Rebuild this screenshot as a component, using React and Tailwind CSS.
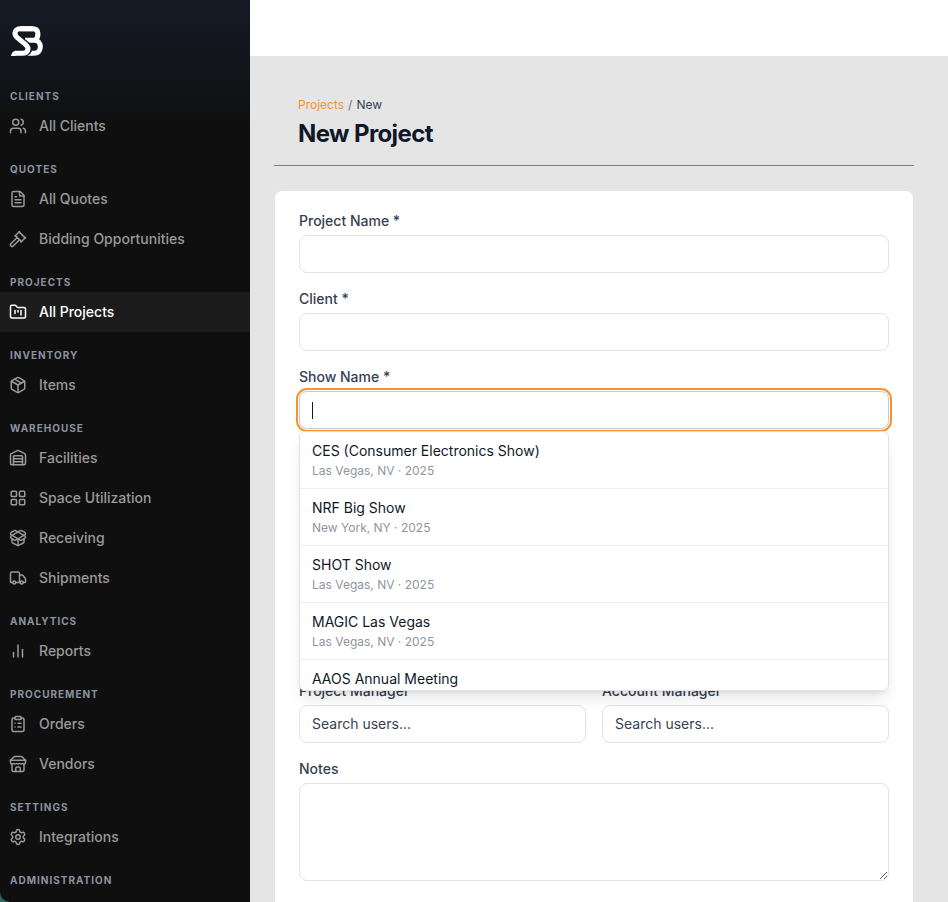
import { useState } from "react";
import {
  ClipboardList,
  FileText,
  FolderKanban,
  Gavel,
  LayoutGrid,
  Package,
  PackageOpen,
  Settings,
  Truck,
  Users,
  Warehouse,
} from "lucide-react";
import { FiBarChart2 } from "react-icons/fi";

// storefront with a flat awning
const Storefront = ({ size, strokeWidth }) => (
  <svg
    viewBox="0 0 24 24"
    width={size}
    height={size}
    fill="none"
    stroke="currentColor"
    strokeWidth={strokeWidth}
    strokeLinecap="round"
    strokeLinejoin="round"
  >
    <path d="m2 7 4.41-4.41A2 2 0 0 1 7.83 2h8.34a2 2 0 0 1 1.42.59L22 7" />
    <path d="M4 12v8a2 2 0 0 0 2 2h12a2 2 0 0 0 2-2v-8" />
    <path d="M15 22v-4a2 2 0 0 0-2-2h-2a2 2 0 0 0-2 2v4" />
    <path d="M2 7h20" />
    <path d="M22 7v3a2 2 0 0 1-2 2a2.7 2.7 0 0 1-1.59-.63.7.7 0 0 0-.82 0A2.7 2.7 0 0 1 16 12a2.7 2.7 0 0 1-1.59-.63.7.7 0 0 0-.82 0A2.7 2.7 0 0 1 12 12a2.7 2.7 0 0 1-1.59-.63.7.7 0 0 0-.82 0A2.7 2.7 0 0 1 8 12a2.7 2.7 0 0 1-1.59-.63.7.7 0 0 0-.82 0A2.7 2.7 0 0 1 4 12a2 2 0 0 1-2-2V7" />
  </svg>
);

const navGroups = [
  { title: "Clients", items: [{ name: "All Clients", icon: Users }] },
  {
    title: "Quotes",
    items: [
      { name: "All Quotes", icon: FileText },
      { name: "Bidding Opportunities", icon: Gavel },
    ],
  },
  { title: "Projects", items: [{ name: "All Projects", icon: FolderKanban, active: true }] },
  { title: "Inventory", items: [{ name: "Items", icon: Package }] },
  {
    title: "Warehouse",
    items: [
      { name: "Facilities", icon: Warehouse },
      { name: "Space Utilization", icon: LayoutGrid },
      { name: "Receiving", icon: PackageOpen },
      { name: "Shipments", icon: Truck },
    ],
  },
  { title: "Analytics", items: [{ name: "Reports", icon: FiBarChart2 }] },
  {
    title: "Procurement",
    items: [
      { name: "Orders", icon: ClipboardList },
      { name: "Vendors", icon: Storefront },
    ],
  },
  { title: "Settings", items: [{ name: "Integrations", icon: Settings }] },
  { title: "Administration", items: [] },
];

const shows = [
  { name: "CES (Consumer Electronics Show)", info: "Las Vegas, NV · 2025" },
  { name: "NRF Big Show", info: "New York, NY · 2025" },
  { name: "SHOT Show", info: "Las Vegas, NV · 2025" },
  { name: "MAGIC Las Vegas", info: "Las Vegas, NV · 2025" },
  { name: "AAOS Annual Meeting", info: "" },
];

const inputClass =
  "block w-full rounded-lg border border-[#e2e2e7] bg-white px-3 py-2 text-sm leading-5 text-gray-900 placeholder:text-gray-700 placeholder:opacity-100";

const Logo = () => (
  <svg viewBox="0 0 96 90" className="h-[30px] w-8" fill="none" strokeWidth="15">
    <path d="M42 43H70C94 43 94 82 70 82H48" stroke="white" />
    <path d="M28 8H66C84 8 84 30 74 42" stroke="white" />
    <path d="M34 82C56 82 58 66 46 56L20 34" stroke="#12161f" strokeWidth="20" />
    <path d="M12 82H34C52 82 56 66 44 56L18 34C6 23 13 8 28 8H66" stroke="white" />
    <path d="M0 90C2 79 6 75 14 74V90Z" fill="white" />
  </svg>
);

const Sidebar = () => (
  <aside className="w-[250px] shrink-0 overflow-hidden rounded-bl-[10px] bg-[#0f0f0f] bg-linear-to-b from-[#151a26] to-[#0f0f0f] to-[130px]">
    <a href="#" aria-label="Home" className="mb-[7px] flex h-[82px] items-center px-[11px]">
      <Logo />
    </a>
    <nav>
      {navGroups.map((group) => (
        <div key={group.title} className="mb-4">
          <h2 className="pb-0.5 pl-2.5 text-[10px] leading-[15px] font-bold tracking-[1px] text-[#8b93a1] uppercase">
            {group.title}
          </h2>
          <ul>
            {group.items.map(({ name, icon: Icon, active }) => (
              <li key={name}>
                <a
                  href="#"
                  className={`flex h-10 items-center gap-3 px-[9px] text-sm font-medium ${
                    active ? "bg-[#1c1c1c] text-white" : "text-[#9a9a9a]"
                  }`}
                >
                  <Icon size={18} strokeWidth={2} />
                  {name}
                </a>
              </li>
            ))}
          </ul>
        </div>
      ))}
    </nav>
  </aside>
);

const Field = ({ id, label, children }) => (
  <div>
    <label htmlFor={id} className="mb-1 block w-fit text-sm leading-5 font-medium text-gray-700">
      {label}
    </label>
    {children}
  </div>
);

const ShowNameField = () => {
  const [value, setValue] = useState("");

  return (
    <Field id="show" label="Show Name *">
      <div className="relative">
        <input
          id="show"
          value={value}
          onChange={(e) => setValue(e.target.value)}
          className="block w-full rounded-lg border border-[#c6cad2] bg-white px-3 py-2 text-sm leading-5 text-gray-900 caret-transparent outline-2 outline-offset-1 outline-[#f7932d]"
        />
        {/* text cursor */}
        {!value && <span className="absolute inset-y-0 left-[13px] my-auto h-[17px] w-px bg-gray-900" />}

        {/* show suggestions */}
        <ul className="absolute inset-x-0 top-full z-10 mt-0.5 h-[260px] overflow-hidden rounded-md border border-[#e2e2e7] bg-white shadow-lg">
          {shows.map((show) => (
            <li key={show.name} className="border-b border-[#eeeef1]">
              <button
                type="button"
                onClick={() => setValue(show.name)}
                className="block w-full px-3 py-2 text-left"
              >
                <span className="block text-sm leading-[22px] text-gray-900">{show.name}</span>
                <span className="block text-xs leading-[18px] text-[#8f95a1]">{show.info}</span>
              </button>
            </li>
          ))}
        </ul>
      </div>
    </Field>
  );
};

export default function App() {
  return (
    <div className="flex h-screen overflow-hidden bg-[#2b6b62] font-['Inter',sans-serif] antialiased">
      <Sidebar />

      <div className="flex min-w-0 flex-1 flex-col bg-[#e5e5e5]">
        <header className="h-[57px] shrink-0 border-b border-[#e2e2e7] bg-white" />

        <main className="flex-1 overflow-hidden pt-6 pr-[34px] pl-6">
          {/* page heading */}
          <div className="border-b border-[#7b7f87] px-6 pt-4 pb-[15px]">
            <div className="flex gap-1 text-xs leading-4 text-gray-700">
              <a href="#" className="text-[#f7932d]">Projects</a>
              <span className="text-gray-500">/</span>
              <span>New</span>
            </div>
            <h1 className="mt-[5px] text-2xl leading-8 font-bold tracking-tight text-gray-900">New Project</h1>
          </div>

          {/* project form */}
          <form className="mt-6 flex flex-col gap-4 rounded-lg border border-[#e2e2e7] bg-white px-6 pt-5 pb-12">
            <Field id="name" label="Project Name *">
              <input id="name" className={inputClass} />
            </Field>
            <Field id="client" label="Client *">
              <input id="client" className={inputClass} />
            </Field>
            <ShowNameField />

            <div className="mt-[236px] grid grid-cols-2 gap-4">
              <Field id="pm" label="Project Manager">
                <input id="pm" placeholder="Search users..." className={inputClass} />
              </Field>
              <Field id="am" label="Account Manager">
                <input id="am" placeholder="Search users..." className={inputClass} />
              </Field>
            </div>

            <Field id="notes" label="Notes">
              <textarea id="notes" rows={4} className={inputClass} />
            </Field>
          </form>
        </main>
      </div>
    </div>
  );
}
